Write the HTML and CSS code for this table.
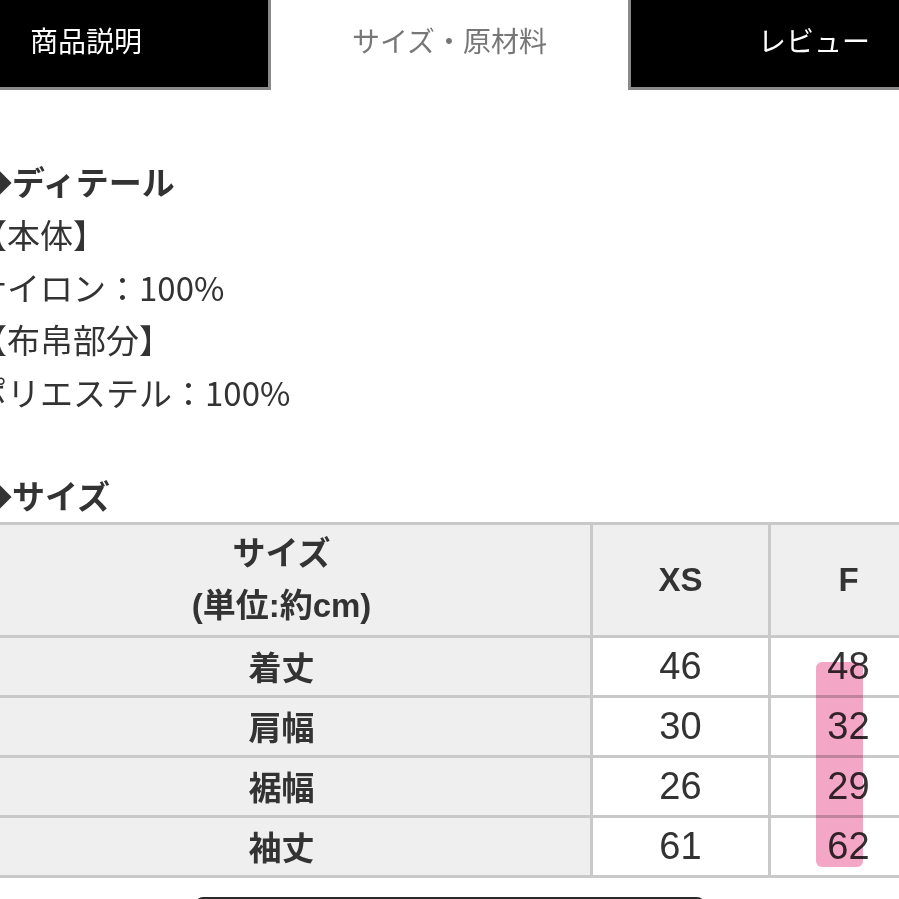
FILE: index.html
```html
<!DOCTYPE html>
<html lang="ja">
<head>
<meta charset="utf-8">
<link rel="stylesheet" href="styles.css">
</head>
<body>
<div class="page">
  <nav class="tabs">
    <div class="tab tab-dark tab-left">商品説明</div>
    <div class="tab tab-active">サイズ・原材料</div>
    <div class="tab tab-dark tab-right">レビュー</div>
  </nav>
  <section class="content">
    <p class="heading">◆ディテール</p>
    <p class="line">【本体】</p>
    <p class="line">ナイロン：100%</p>
    <p class="line">【布帛部分】</p>
    <p class="line">ポリエステル：100%</p>
    <p class="line blank">&nbsp;</p>
    <p class="heading">◆サイズ</p>
    <div class="table-wrap">
      <table class="size-table">
        <colgroup>
          <col class="c1"><col class="c2"><col class="c3">
        </colgroup>
        <thead>
          <tr>
            <th class="head-label">サイズ<br>(単位:約cm)</th>
            <th>XS</th>
            <th>F</th>
          </tr>
        </thead>
        <tbody>
          <tr><th>着丈</th><td>46</td><td>48</td></tr>
          <tr><th>肩幅</th><td>30</td><td>32</td></tr>
          <tr><th>裾幅</th><td>26</td><td>29</td></tr>
          <tr><th>袖丈</th><td>61</td><td>62</td></tr>
        </tbody>
      </table>
      <div class="marker"></div>
    </div>
  </section>
  <div class="btn-row"><div class="more-btn"></div></div>
</div>
</body>
</html>
```

FILE: styles.css
```css
html, body {
  margin: 0;
  padding: 0;
  background: #ffffff;
}
body {
  width: 899px;
  height: 899px;
  overflow: hidden;
  font-family: "Noto Sans CJK JP", "Noto Sans", sans-serif;
  color: #333333;
}
.page {
  width: 899px;
}
.tabs {
  display: flex;
  height: 90px;
}
.tab {
  box-sizing: border-box;
  height: 90px;
  font-size: 28px;
  line-height: 80px;
  white-space: nowrap;
}
.tab-dark {
  background: #000000;
  color: #ffffff;
  border-bottom: 3px solid #8a8a8a;
}
.tab-left {
  width: 271px;
  padding-left: 30px;
  border-right: 3px solid #8a8a8a;
}
.tab-active {
  width: 357px;
  background: #ffffff;
  color: #777777;
  text-align: center;
}
.tab-right {
  width: 271px;
  padding-left: 127px;
  border-left: 3px solid #8a8a8a;
}
.content {
  margin-left: -26px;
  padding-top: 65px;
}
.content p {
  margin: 0;
  font-size: 33px;
  line-height: 52.8px;
  white-space: nowrap;
}
.heading {
  font-weight: bold;
  padding-left: 5px;
}
.content .blank {
  line-height: 49.8px;
}
.table-wrap {
  position: relative;
  margin-left: -4px;
  width: 956px;
}
.size-table {
  width: 956px;
  border-collapse: collapse;
  table-layout: fixed;
  border: 3px solid #c9c9c9;
}
.c1 { width: 620px; }
.c2 { width: 178px; }
.c3 { width: 158px; }
.size-table th,
.size-table td {
  border: 3px solid #c9c9c9;
  text-align: center;
  padding: 0;
  height: 57px;
}
.size-table thead th {
  background: #efefef;
  font-family: "Liberation Sans", "Noto Sans CJK JP", sans-serif;
  font-weight: bold;
  font-size: 33px;
  line-height: 52px;
  height: 110px;
  color: #333333;
}
.size-table tbody th {
  background: #efefef;
  font-weight: bold;
  font-size: 33px;
  color: #333333;
}
.size-table tbody td {
  background: #ffffff;
  font-family: "Liberation Sans", "Noto Sans", sans-serif;
  font-size: 38px;
  font-weight: normal;
  color: #333333;
}
.marker {
  position: absolute;
  left: 846px;
  top: 140px;
  width: 47px;
  height: 205px;
  border-radius: 6px;
  background: #f4a6c6;
  mix-blend-mode: multiply;
}
.btn-row {
  display: flex;
  justify-content: center;
  padding-top: 19px;
}
.more-btn {
  width: 506px;
  height: 60px;
  border: 2px solid #2a2a2a;
  border-radius: 8px;
}
```
